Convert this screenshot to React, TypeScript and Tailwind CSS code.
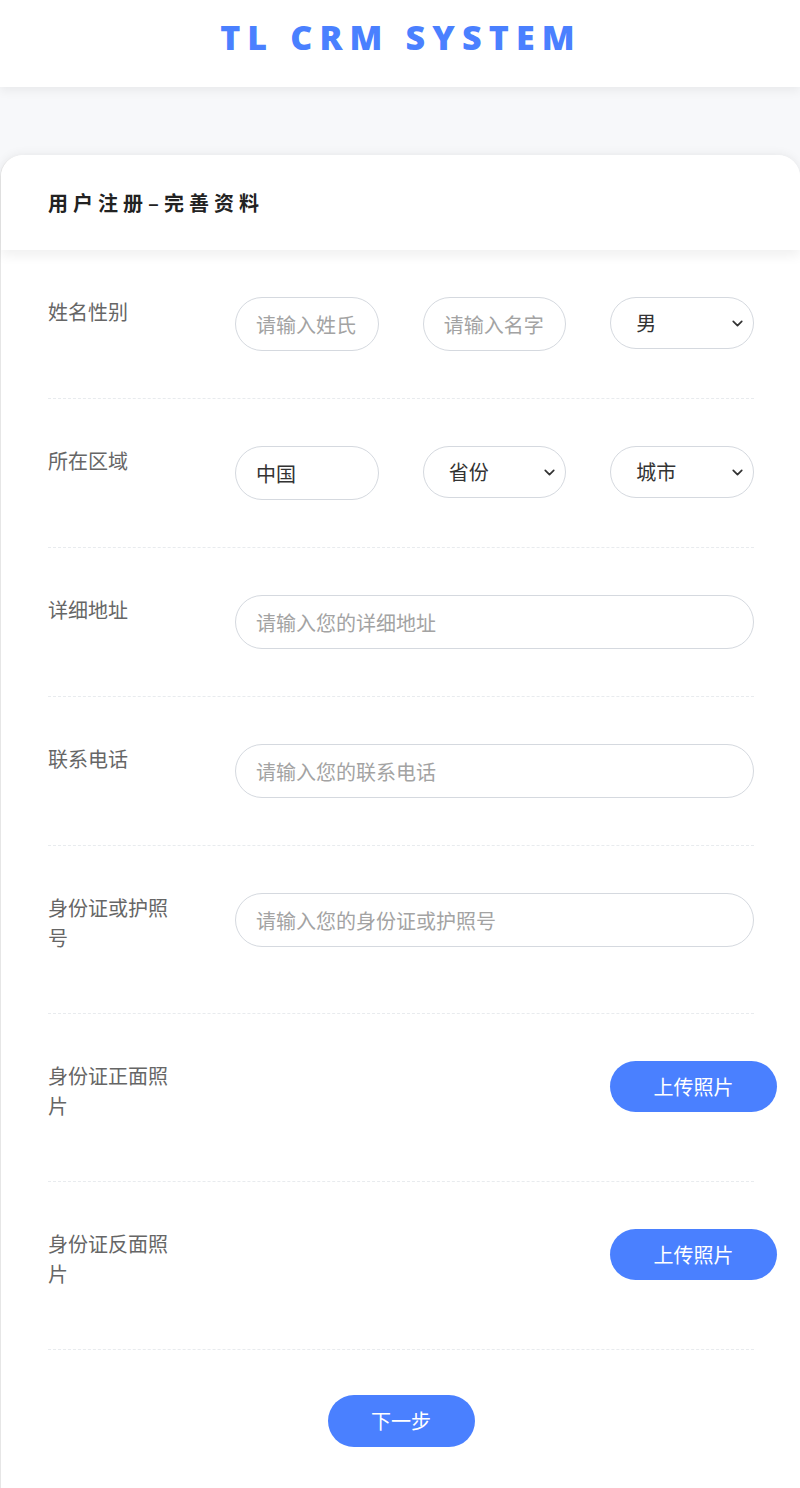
import { ChevronDown } from 'lucide-react';

const cjk = { fontFamily: '"Noto Sans CJK SC", "Noto Sans", sans-serif' };

function Field({ placeholder, value }: { placeholder?: string; value?: string }) {
  return (
    <input
      className="h-[54px] w-full min-w-0 rounded-full border border-[#d5d9df] bg-white px-5 text-[20px] text-[#333] placeholder:text-[#a3a3a3] outline-none"
      placeholder={placeholder}
      defaultValue={value}
    />
  );
}

function Select({ value }: { value: string }) {
  return (
    <div className="flex h-[52px] w-full items-center justify-between rounded-full border border-[#d5d9df] bg-white pl-[25px] pr-[7px] text-[20px] text-[#333]">
      <span>{value}</span>
      <ChevronDown size={17} strokeWidth={2.4} className="text-[#333]" />
    </div>
  );
}

function Row({ label, children }: { label: string; children: React.ReactNode }) {
  return (
    <div className="flex items-start border-b border-dashed border-[#e8ebee] pt-[47px] pb-[47px]">
      <div className="mb-[13px] w-[130px] shrink-0 text-[20px] leading-[30px] text-[#666]">{label}</div>
      <div className="ml-[57px] flex w-[519px] shrink-0 items-start">{children}</div>
    </div>
  );
}

function UploadButton() {
  return (
    <button className="ml-[375px] h-[51px] w-[167px] shrink-0 rounded-full bg-[#4a80ff] text-[20px] text-white">
      上传照片
    </button>
  );
}

export default function App() {
  return (
    <div className="min-h-[1488px] bg-[#f7f8fa]" style={cjk}>
      <header className="relative z-10 flex h-[87px] justify-center bg-white pt-[14px] shadow-[0_4px_10px_rgba(0,0,0,0.06)]">
        <h1
          className="pl-[2px] text-[34px] leading-[46px] font-extrabold tracking-[0.21em] text-[#4a80ff]"
          style={{ fontFamily: '"Open Sans", Lato, sans-serif' }}
        >
          TL CRM SYSTEM
        </h1>
      </header>

      <main className="pt-[68px]">
        <div className="rounded-t-[22px] border-l border-[#e6e6e6] bg-white shadow-[0_-2px_10px_rgba(0,0,0,0.05)]">
          <div className="relative z-10 flex h-[95px] items-center rounded-t-[22px] bg-white pl-[47px] shadow-[0_6px_12px_rgba(0,0,0,0.06)]">
            <h2 className="text-[20px] font-bold tracking-[5px] text-[#222]">用户注册–完善资料</h2>
          </div>

          <div className="pl-[47px] pr-[46px] pb-[42px]">
            <Row label="姓名性别">
              <div className="grid w-full grid-cols-3 gap-[44px]">
                <Field placeholder="请输入姓氏" />
                <Field placeholder="请输入名字" />
                <Select value="男" />
              </div>
            </Row>
            <Row label="所在区域">
              <div className="grid w-full grid-cols-3 gap-[44px]">
                <Field value="中国" />
                <Select value="省份" />
                <Select value="城市" />
              </div>
            </Row>
            <Row label="详细地址">
              <Field placeholder="请输入您的详细地址" />
            </Row>
            <Row label="联系电话">
              <Field placeholder="请输入您的联系电话" />
            </Row>
            <Row label="身份证或护照号">
              <Field placeholder="请输入您的身份证或护照号" />
            </Row>
            <Row label="身份证正面照片">
              <UploadButton />
            </Row>
            <Row label="身份证反面照片">
              <UploadButton />
            </Row>

            <div className="flex justify-center pt-[45px]">
              <button className="h-[52px] w-[147px] rounded-full bg-[#4a80ff] text-[20px] text-white">下一步</button>
            </div>
          </div>
        </div>
      </main>
    </div>
  );
}
